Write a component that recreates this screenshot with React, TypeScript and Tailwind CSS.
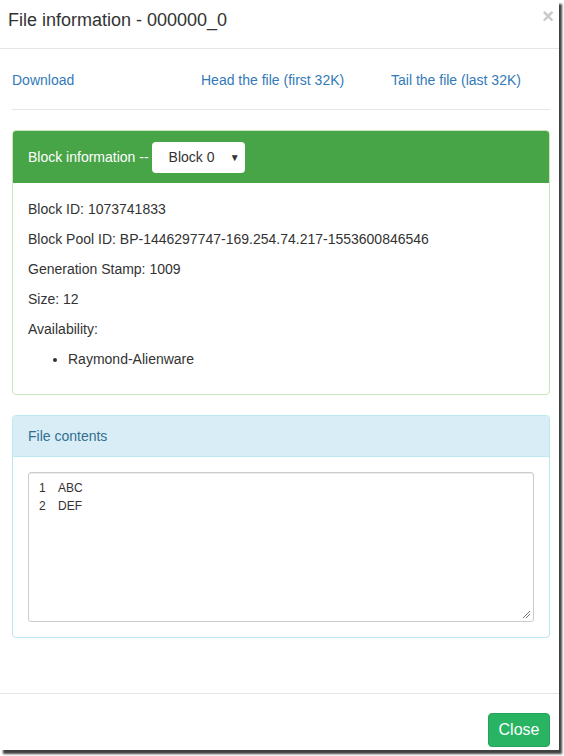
import React from "react";

export default function App() {
  return (
    <div className="w-[564px] h-[756px] bg-white" style={{ fontFamily: '"Liberation Sans", Arial, sans-serif' }}>
      <div className="w-[559px] h-[750px] bg-white flex flex-col shadow-[3px_4px_2px_rgba(0,0,0,0.75)] text-[14px] text-[#333]">
        {/* header */}
        <div className="h-[49px] border-b border-[#e5e5e5] flex items-start justify-between pl-[8px] pr-[5px] pt-[8px]">
          <h4 className="text-[18px] leading-[24px] text-[#333]">File information - 000000_0</h4>
          <span className="text-[20px] font-bold text-[#c8c8c8] leading-[20px] mt-[-2px]">×</span>
        </div>
        {/* body */}
        <div className="flex-1 px-[12px] pt-[21px]">
          <div className="flex pb-[19px] border-b border-[#e5e5e5] mr-[-3px] text-[#337ab7] leading-[20px]">
            <span className="w-[189px]">Download</span>
            <span className="w-[190px]">Head the file (first 32K)</span>
            <span>Tail the file (last 32K)</span>
          </div>

          <div className="mt-[20px] w-[538px] border border-[#c9e6be] rounded-[4px] overflow-hidden">
            <div className="h-[52px] bg-[#47a447] flex items-center pl-[15px] text-white">
              <span>Block information --</span>
              <div className="ml-[3px] w-[93px] h-[31px] bg-white rounded-[4px] flex items-center justify-between pl-[17px] pr-[5px] text-[#333]">
                <span>Block 0</span>
                <span className="text-[10px]">▼</span>
              </div>
            </div>
            <div className="pl-[15px] pt-[16px] pb-[25px] leading-[20px] flex flex-col gap-[10px]">
              <div>Block ID: 1073741833</div>
              <div>Block Pool ID: BP-1446297747-169.254.74.217-1553600846546</div>
              <div>Generation Stamp: 1009</div>
              <div>Size: 12</div>
              <div>Availability:</div>
              <ul className="list-disc pl-[40px]">
                <li>Raymond-Alienware</li>
              </ul>
            </div>
          </div>

          <div className="mt-[20px] w-[538px] border border-[#bce8f1] rounded-[4px] overflow-hidden">
            <div className="h-[41px] bg-[#d9edf7] border-b border-[#bce8f1] flex items-center pl-[15px] text-[#31708f]">
              File contents
            </div>
            <div className="p-[15px]">
              <div className="relative h-[150px] border border-[#ccc] rounded-[3px] shadow-[inset_0_1px_1px_rgba(0,0,0,0.075)] pl-[10px] pt-[6px] text-[12px] leading-[18px] text-[#333]">
                <div className="flex"><span className="w-[19px]">1</span><span>ABC</span></div>
                <div className="flex"><span className="w-[19px]">2</span><span>DEF</span></div>
                <svg className="absolute right-[2px] bottom-[2px]" width="9" height="9" viewBox="0 0 9 9">
                  <line x1="1" y1="8" x2="8" y2="1" stroke="#777" strokeWidth="1" />
                  <line x1="4" y1="8" x2="8" y2="4" stroke="#777" strokeWidth="1" />
                </svg>
              </div>
            </div>
          </div>
        </div>
        {/* footer */}
        <div className="h-[57px] border-t border-[#e5e5e5] flex justify-end items-start pr-[9px] pt-[19px] mb-[0px]">
          <div className="w-[62px] h-[34px] rounded-[4px] bg-[#28b463] border border-[#24a35a] text-white text-[16px] flex items-center justify-center">
            Close
          </div>
        </div>
      </div>
    </div>
  );
}
